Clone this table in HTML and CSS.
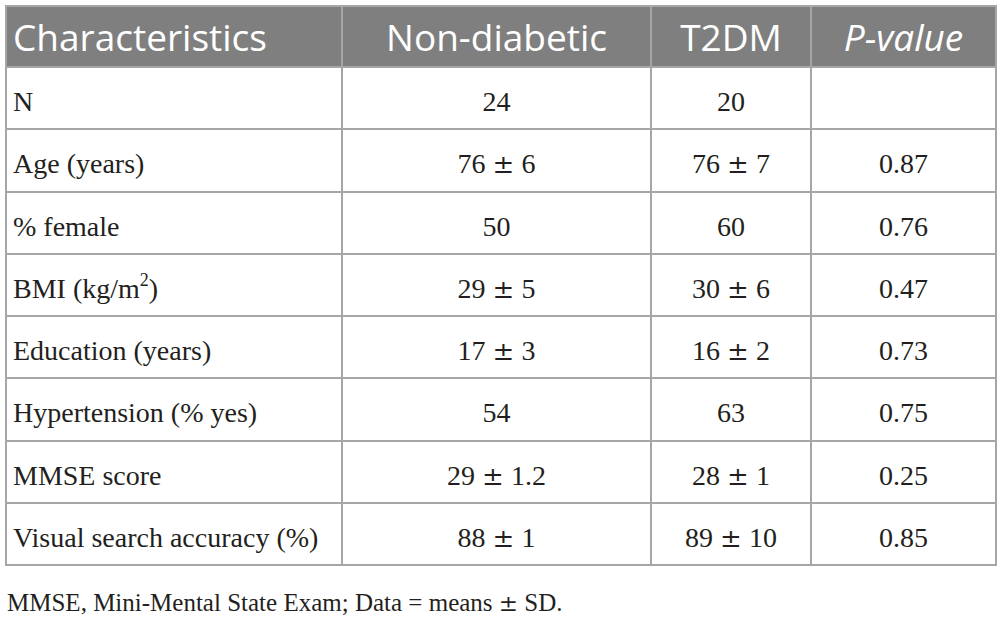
FILE: index.html
```html
<!DOCTYPE html>
<html>
<head>
<meta charset="utf-8">
<link rel="stylesheet" href="styles.css">
</head>
<body>
<div class="page">
  <table class="data">
    <colgroup>
      <col class="c1"><col class="c2"><col class="c3"><col class="c4">
    </colgroup>
    <thead>
      <tr>
        <th class="left">Characteristics</th>
        <th>Non-diabetic</th>
        <th>T2DM</th>
        <th><i>P-value</i></th>
      </tr>
    </thead>
    <tbody>
      <tr><td class="left">N</td><td>24</td><td>20</td><td></td></tr>
      <tr><td class="left">Age (years)</td><td>76 <span class="pm">±</span> 6</td><td>76 <span class="pm">±</span> 7</td><td>0.87</td></tr>
      <tr><td class="left">% female</td><td>50</td><td>60</td><td>0.76</td></tr>
      <tr><td class="left">BMI (kg/m<sup>2</sup>)</td><td>29 <span class="pm">±</span> 5</td><td>30 <span class="pm">±</span> 6</td><td>0.47</td></tr>
      <tr><td class="left">Education (years)</td><td>17 <span class="pm">±</span> 3</td><td>16 <span class="pm">±</span> 2</td><td>0.73</td></tr>
      <tr><td class="left">Hypertension (% yes)</td><td>54</td><td>63</td><td>0.75</td></tr>
      <tr><td class="left">MMSE score</td><td>29 <span class="pm">±</span> 1.2</td><td>28 <span class="pm">±</span> 1</td><td>0.25</td></tr>
      <tr><td class="left">Visual search accuracy (%)</td><td>88 <span class="pm">±</span> 1</td><td>89 <span class="pm">±</span> 10</td><td>0.85</td></tr>
    </tbody>
  </table>
  <p class="note">MMSE, Mini-Mental State Exam; Data = means <span class="pm small">±</span> SD.</p>
</div>
</body>
</html>
```

FILE: styles.css
```css
html, body {
  margin: 0;
  padding: 0;
  background: #ffffff;
}
.page {
  padding: 5px 0 0 5px;
}
.data {
  border-collapse: collapse;
  width: 990px;
  table-layout: fixed;
  border: 2px solid #a6a6a6;
}
.c1 { width: 336px; }
.c2 { width: 309px; }
.c3 { width: 160px; }
.c4 { width: 185px; }
.data th {
  background: #7f7f7f;
  color: #ffffff;
  font-family: "Open Sans", "DejaVu Sans", sans-serif;
  font-weight: 400;
  font-size: 37px;
  height: 58px;
  padding: 0 6px 1px;
  border: 2px solid #a6a6a6;
  text-align: center;
  line-height: 1;
}
.data td {
  font-family: "Liberation Serif", "Times New Roman", serif;
  font-size: 28px;
  color: #231f20;
  height: 52.25px;
  padding: 8px 6px 0;
  border: 2px solid #a6a6a6;
  text-align: center;
  line-height: 1;
}
.data .left {
  text-align: left;
}
.data sup {
  font-size: 18px;
  vertical-align: 12px;
  line-height: 0;
}
.pm {
  font-family: "DejaVu Serif", serif;
  font-size: 26px;
  line-height: 0;
}
.pm.small {
  font-size: 23px;
}
.note {
  margin: 22px 0 0 2px;
  font-family: "Liberation Serif", "Times New Roman", serif;
  font-size: 25px;
  line-height: 30px;
  color: #231f20;
}
```
